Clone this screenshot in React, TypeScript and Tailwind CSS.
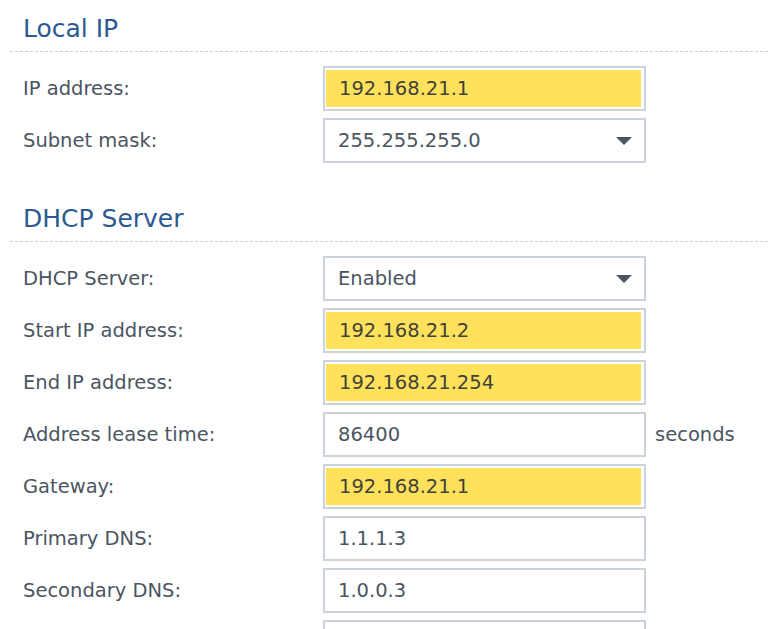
import React from "react";

type Row = {
  label: string;
  value: string;
  kind: "text" | "filled" | "select";
  suffix?: string;
};

const localRows: Row[] = [
  { label: "IP address:", value: "192.168.21.1", kind: "filled" },
  { label: "Subnet mask:", value: "255.255.255.0", kind: "select" },
];

const dhcpRows: Row[] = [
  { label: "DHCP Server:", value: "Enabled", kind: "select" },
  { label: "Start IP address:", value: "192.168.21.2", kind: "filled" },
  { label: "End IP address:", value: "192.168.21.254", kind: "filled" },
  { label: "Address lease time:", value: "86400", kind: "text", suffix: "seconds" },
  { label: "Gateway:", value: "192.168.21.1", kind: "filled" },
  { label: "Primary DNS:", value: "1.1.1.3", kind: "text" },
  { label: "Secondary DNS:", value: "1.0.0.3", kind: "text" },
  // next row is cut off by the window, only its box top shows
  { label: "", value: "", kind: "text" },
];

const Field: React.FC<{ row: Row }> = ({ row }) => {
  if (row.kind === "filled") {
    return (
      <div className="w-[323px] h-[45px] border-2 border-[#cdd3dc] bg-white pl-[1px] pr-[3px] py-[2px]">
        <div className="h-full bg-[#ffe15c] flex items-center pl-[13px] text-[#3f4238]">
          {row.value}
        </div>
      </div>
    );
  }
  return (
    <div className="w-[323px] h-[45px] border-2 border-[#cdd3dc] bg-white flex items-center pl-[13px] pr-[12px]">
      <span className="flex-1">{row.value}</span>
      {row.kind === "select" && (
        <svg width="16" height="8" viewBox="0 0 16 8" className="fill-[#4b5562]">
          <path d="M0 0 L16 0 L8 8 Z" />
        </svg>
      )}
    </div>
  );
};

const Section: React.FC<{ title: string; rows: Row[]; className?: string }> = ({
  title,
  rows,
  className,
}) => (
  <section className={className}>
    <div className="border-b border-dashed border-[#c3d2e2] pt-[13px] pb-[6px] pl-[13px]">
      <h2 className="text-[25px] leading-[32px] text-[#2b5a92]">{title}</h2>
    </div>
    <div className="mt-[14px] flex flex-col gap-[7px] pl-[13px]">
      {rows.map((row, i) => (
        <div key={i} className="flex items-center">
          <label className="w-[300px] shrink-0">{row.label}</label>
          <Field row={row} />
          {row.suffix && <span className="ml-[9px]">{row.suffix}</span>}
        </div>
      ))}
    </div>
  </section>
);

export default function App() {
  return (
    <div className="h-[629px] w-[768px] overflow-hidden bg-white pl-[10px] font-['DejaVu_Sans',sans-serif] text-[19.5px] text-[#4b5562]">
      <Section title="Local IP" rows={localRows} />
      <Section title="DHCP Server" rows={dhcpRows} className="mt-[27px]" />
    </div>
  );
}
